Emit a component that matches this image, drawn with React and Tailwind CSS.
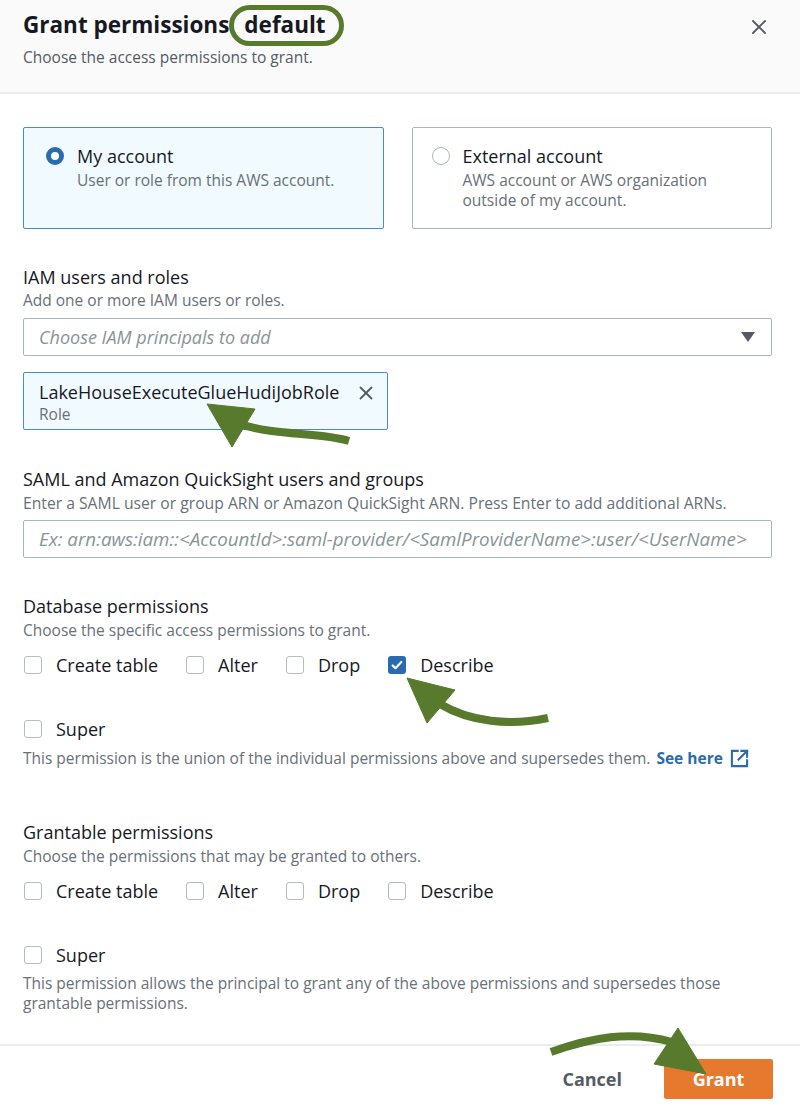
import { X } from 'lucide-react';

const font = { fontFamily: '"Open Sans", "Noto Sans", sans-serif' };

const Checkbox = ({ checked }) =>
  checked ? (
    <span className="flex h-[18px] w-[18px] items-center justify-center rounded-[3px] bg-[#2a6bb0]">
      <svg viewBox="0 0 16 16" className="h-[14px] w-[14px]" fill="none" stroke="white" strokeWidth="2.4" strokeLinecap="round" strokeLinejoin="round">
        <path d="M3 8.5l3.2 3.2L13 4.5" />
      </svg>
    </span>
  ) : (
    <span className="block h-[18px] w-[18px] rounded-[3px] border border-[#b5bcbd] bg-white" />
  );

const CheckItem = ({ label, checked }) => (
  <label className="flex h-6 items-center gap-[14px]">
    <Checkbox checked={checked} />
    <span className="text-[18px] text-[#16191f]">{label}</span>
  </label>
);

const Radio = ({ checked }) =>
  checked ? (
    <span className="block h-[18px] w-[18px] rounded-full border-[5px] border-[#2a6bb0] bg-white" />
  ) : (
    <span className="block h-[18px] w-[18px] rounded-full border border-[#aab7b8] bg-white" />
  );

const Field = ({ title, desc, className = '', descClass = 'mt-[1px] text-[15.5px]' }) => (
  <div className={className}>
    <div className="text-[18px] leading-6 text-[#16191f]">{title}</div>
    <div className={`leading-5 text-[#687078] ${descClass}`}>{desc}</div>
  </div>
);

export default function App() {
  return (
    <div className="relative h-[1112px] w-[800px] overflow-hidden bg-white" style={font}>
      {/* header */}
      <div className="flex h-[94px] justify-between border-b-2 border-[#eaeded] bg-[#fafafa] pl-[23px] pr-[29px]">
        <div className="pt-[10px]">
          <h1 className="text-[22.5px] font-bold leading-[30px] text-[#16191f]">
            Grant permissions
            <span className="relative ml-[15px] inline-block">
              default
              <span className="absolute -bottom-[6px] -left-[15px] -right-[18px] -top-[5px] rounded-full border-[5px] border-[#587a2c]" />
            </span>
          </h1>
          <p className="mt-[7px] text-[15.5px] leading-5 text-[#545b64]">Choose the access permissions to grant.</p>
        </div>
        <button className="mt-[15px] h-6 text-[#545b64]">
          <X className="h-[24px] w-[24px]" strokeWidth={1.9} />
        </button>
      </div>

      <div className="pl-[23px] pr-[28px] pt-[33px]">
        {/* account cards */}
        <div className="grid grid-cols-2 gap-[28px]">
          <div className="flex h-[102px] gap-[13px] rounded-[2px] border border-[#4a8bc2] bg-[#f1faff] pl-[22px] pt-[16px]">
            <span className="mt-[3px]"><Radio checked /></span>
            <div>
              <div className="text-[18px] leading-6 text-[#16191f]">My account</div>
              <div className="mt-[2px] text-[15.5px] leading-5 text-[#687078]">User or role from this AWS account.</div>
            </div>
          </div>
          <div className="flex h-[102px] gap-[13px] rounded-[2px] border border-[#aab7b8] bg-white pl-[19px] pt-[16px]">
            <span className="mt-[3px]"><Radio /></span>
            <div>
              <div className="text-[18px] leading-6 text-[#16191f]">External account</div>
              <div className="mt-[2px] text-[15.5px] leading-5 text-[#687078]">
                AWS account or AWS organization
                <br />
                outside of my account.
              </div>
            </div>
          </div>
        </div>

        {/* IAM */}
        <Field className="mt-[36px]" title="IAM users and roles" desc="Add one or more IAM users or roles." />
        <div className="mt-[8px] flex h-[38px] items-center justify-between rounded-[2px] border border-[#aab7b8] bg-white pl-[15px] pr-[16px]">
          <span className="text-[18px] italic text-[#879596]">Choose IAM principals to add</span>
          <svg viewBox="0 0 14 10" className="h-[10px] w-[14px]">
            <path d="M0 0h14L7 10z" fill="#545b64" />
          </svg>
        </div>
        <div className="mt-[16px] flex h-[58px] w-[365px] items-start justify-between rounded-[2px] border border-[#4a8bc2] bg-[#f1faff] pl-[15px] pr-[10px] pt-[7px]">
          <div>
            <div className="text-[18px] leading-6 text-[#16191f]">LakeHouseExecuteGlueHudiJobRole</div>
            <div className="text-[15.5px] leading-5 text-[#687078]">Role</div>
          </div>
          <X className="mt-[2px] h-[22px] w-[22px] text-[#545b64]" strokeWidth={2} />
        </div>

        {/* SAML */}
        <Field
          className="mt-[37px]"
          title="SAML and Amazon QuickSight users and groups"
          desc="Enter a SAML user or group ARN or Amazon QuickSight ARN. Press Enter to add additional ARNs."
          descClass="mt-[2px] text-[15.7px]"
        />
        <div className="mt-[7px] flex h-[38px] items-center rounded-[2px] border border-[#aab7b8] bg-white pl-[15px]">
          <span className="text-[18.8px] italic text-[#879596]">
            Ex: arn:aws:iam::&lt;AccountId&gt;:saml-provider/&lt;SamlProviderName&gt;:user/&lt;UserName&gt;
          </span>
        </div>

        {/* database permissions */}
        <Field className="mt-[36px]" title="Database permissions" desc="Choose the specific access permissions to grant." descClass="mt-[2px] text-[15.5px]" />
        <div className="mt-[13px] flex gap-[28px] pl-px">
          <CheckItem label="Create table" />
          <CheckItem label="Alter" />
          <CheckItem label="Drop" />
          <CheckItem label="Describe" checked />
        </div>
        <div className="mt-[40px] pl-px">
          <CheckItem label="Super" />
        </div>
        <p className="mt-[7px] flex items-center text-[15.5px] leading-5 text-[#687078]">
          This permission is the union of the individual permissions above and supersedes them.
          <a className="ml-[6px] font-bold text-[#2a6bb0]">See here</a>
          <svg viewBox="0 0 20 20" className="ml-[7px] h-[19px] w-[19px]" fill="none" stroke="#2a6bb0" strokeWidth="2.2" strokeLinecap="square">
            <path d="M8 2H2v16h16v-6" />
            <path d="M12 2h6v6" />
            <path d="M18 2l-9 9" />
          </svg>
        </p>

        {/* grantable permissions */}
        <Field className="mt-[52px]" title="Grantable permissions" desc="Choose the permissions that may be granted to others." descClass="mt-[2px] text-[15.5px]" />
        <div className="mt-[13px] flex gap-[28px] pl-px">
          <CheckItem label="Create table" />
          <CheckItem label="Alter" />
          <CheckItem label="Drop" />
          <CheckItem label="Describe" />
        </div>
        <div className="mt-[40px] pl-px">
          <CheckItem label="Super" />
        </div>
        <p className="mt-[6px] text-[15.5px] leading-5 text-[#687078]">
          This permission allows the principal to grant any of the above permissions and supersedes those
          <br />
          grantable permissions.
        </p>
      </div>

      {/* footer */}
      <div className="absolute inset-x-0 bottom-0 flex h-[68px] items-center justify-end gap-[42px] border-t-2 border-[#eaeded] pr-[27px]">
        <button className="text-[18px] font-bold text-[#545b64]">Cancel</button>
        <button className="h-[40px] w-[109px] rounded-[2px] bg-[#e7792f] text-[18px] font-bold text-white">Grant</button>
      </div>

      {/* annotation arrows */}
      <svg className="pointer-events-none absolute inset-0" width="800" height="1112" viewBox="0 0 800 1112">
        <g fill="#587a2c" stroke="#587a2c">
          <path d="M349 441 C 320 432, 275 436, 240 424" fill="none" strokeWidth="8" />
          <path d="M207 404 L 255 409 L 232 447 Z" strokeWidth="1" />
          <path d="M548 718 C 510 726, 470 722, 440 704" fill="none" strokeWidth="8" />
          <path d="M407 678 L 455 690 L 427 723 Z" strokeWidth="1" />
          <path d="M551 1052 C 590 1038, 630 1030, 672 1042" fill="none" strokeWidth="8" />
          <path d="M678 1028 L 654 1064 L 706 1074 Z" strokeWidth="1" />
        </g>
      </svg>
    </div>
  );
}
